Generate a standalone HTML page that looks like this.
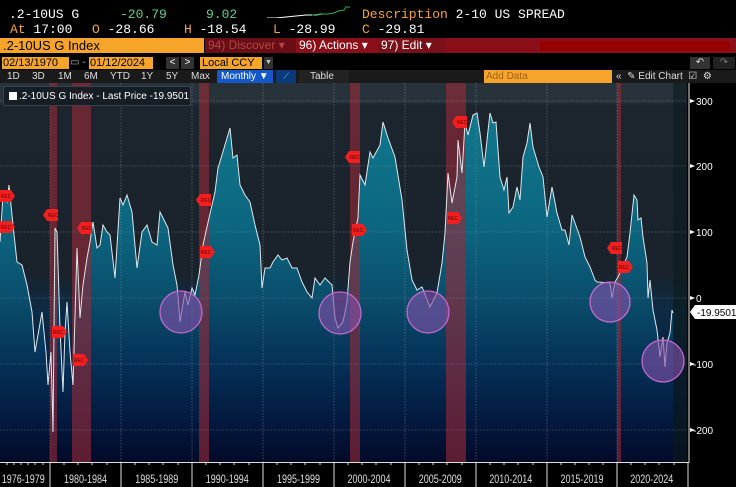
<!DOCTYPE html>
<html><head><meta charset="utf-8"><style>
body{margin:0;width:736px;height:487px;background:#000;overflow:hidden;font-family:"Liberation Sans",sans-serif;position:relative}
.m{font-family:"Liberation Mono",monospace;font-size:13px;position:absolute;white-space:nowrap}
.a{position:absolute;white-space:nowrap}
</style></head><body>
<div class="m" style="left:9px;top:7px;color:#fff">.2-10US G</div>
<div class="m" style="left:120px;top:7px;color:#5fd38a">-20.79</div>
<div class="m" style="left:206px;top:7px;color:#5fd38a">9.02</div>
<div class="m" style="left:362px;top:7px;color:#f7a535">Description <span style="color:#fff">2-10 US SPREAD</span></div>
<div class="m" style="left:10px;top:22px;color:#f7a535">At <span style="color:#fff">17:00</span></div>
<div class="m" style="left:92px;top:22px;color:#f7a535">O <span style="color:#fff">-28.66</span></div>
<div class="m" style="left:184px;top:22px;color:#f7a535">H <span style="color:#fff">-18.54</span></div>
<div class="m" style="left:273px;top:22px;color:#f7a535">L <span style="color:#fff">-28.99</span></div>
<div class="m" style="left:362px;top:22px;color:#f7a535">C <span style="color:#fff">-29.81</span></div>
<svg class="a" style="left:266px;top:2px" width="86" height="16"><polyline points="1,16 10,16 20,15 30,14 40,13 50,13 56,12" stroke="#fff" fill="none" stroke-width="1"/><polyline points="46,13 56,12 62,12 68,11 72,9 78,8 80,5 84,5" stroke="#2db34a" fill="none" stroke-width="1"/></svg>
<div class="a" style="left:0;top:38px;width:204px;height:15px;background:#f7a52a;color:#000;font-size:13px;line-height:15px;padding-left:3px;box-sizing:border-box">.2-10US G Index</div>
<div class="a" style="left:205px;top:38px;width:531px;height:15px;background:#8a0f18"></div>
<div class="a" style="left:205px;top:38px;width:88px;height:15px;background:#6a0d14;color:#b04a4a;font-size:12px;line-height:15px;padding-left:3px">94) Discover ▾</div>
<div class="a" style="left:296px;top:38px;width:80px;height:15px;color:#fff;font-size:12px;line-height:15px;padding-left:3px">96) Actions ▾</div>
<div class="a" style="left:378px;top:38px;width:64px;height:15px;background:#7a1018;color:#fff;font-size:12px;line-height:15px;padding-left:3px">97) Edit ▾</div>
<div class="a" style="left:540px;top:41px;width:190px;height:10px;background:#960000"></div>
<div class="a" style="left:2px;top:57px;width:66px;height:12px;background:#f7a52a;color:#000;font-size:11px;line-height:12px;padding-left:1px">02/13/1970</div>
<div class="a" style="left:70px;top:57px;font-size:10px;color:#bbb;line-height:12px">▭ -</div>
<div class="a" style="left:89px;top:57px;width:63px;height:12px;background:#f7a52a;color:#000;font-size:11px;line-height:12px;padding-left:1px">01/12/2024</div>
<div class="a" style="left:166px;top:57px;width:13px;height:12px;background:#333;color:#fff;font-size:10px;line-height:12px;text-align:center">&lt;</div>
<div class="a" style="left:181px;top:57px;width:13px;height:12px;background:#333;color:#fff;font-size:10px;line-height:12px;text-align:center">&gt;</div>
<div class="a" style="left:200px;top:57px;width:60px;height:12px;background:#f7a52a;color:#000;font-size:11px;line-height:12px;padding-left:2px">Local CCY</div>
<div class="a" style="left:264px;top:57px;width:9px;height:12px;background:#333;color:#ccc;font-size:7px;line-height:12px;text-align:center">▼</div>
<div class="a" style="left:690px;top:57px;width:20px;height:12px;background:#333;color:#ddd;font-size:10px;line-height:12px;text-align:center">↶</div>
<div class="a" style="left:713px;top:57px;width:22px;height:12px;background:#222;color:#777;font-size:10px;line-height:12px;text-align:center">↷</div>
<div class="a" style="left:0;top:70px;width:736px;height:13px;background:#1a1a1a"></div>
<div class="a" style="left:0;top:70px;height:13px;font-size:10px;line-height:13px;color:#ddd;word-spacing:0">
<span style="position:absolute;left:7px">1D</span><span style="position:absolute;left:32px">3D</span><span style="position:absolute;left:58px">1M</span><span style="position:absolute;left:84px">6M</span><span style="position:absolute;left:110px">YTD</span><span style="position:absolute;left:141px">1Y</span><span style="position:absolute;left:166px">5Y</span><span style="position:absolute;left:191px">Max</span></div>
<div class="a" style="left:217px;top:70px;width:56px;height:13px;background:#1258c8;color:#fff;font-size:10px;line-height:13px;padding-left:4px;box-sizing:border-box">Monthly ▼</div>
<div class="a" style="left:276px;top:70px;width:20px;height:13px;background:#0a3a7a;color:#6af;font-size:9px;line-height:13px;text-align:center">⟋</div>
<div class="a" style="left:299px;top:70px;width:50px;height:13px;background:#222;color:#ddd;font-size:10px;line-height:13px;padding-left:11px;box-sizing:border-box">Table</div>
<div class="a" style="left:484px;top:70px;width:128px;height:13px;background:#f7a52a;color:#a0601a;font-size:10px;line-height:13px;padding-left:2px;box-sizing:border-box">Add Data</div>
<div class="a" style="left:616px;top:70px;color:#ddd;font-size:10px;line-height:13px">«&nbsp;&nbsp;✎ Edit Chart&nbsp;&nbsp;☑&nbsp;&nbsp;⚙</div>
<svg class="a" style="left:0;top:83px" width="736" height="404" viewBox="0 83 736 404">
<defs>
<linearGradient id="bg" x1="0" y1="83" x2="0" y2="462" gradientUnits="userSpaceOnUse">
<stop offset="0" stop-color="#28323b"/><stop offset="0.05" stop-color="#28323b"/><stop offset="0.06" stop-color="#1c242d"/><stop offset="0.5" stop-color="#1a232c"/><stop offset="0.6" stop-color="#0d2b45"/><stop offset="0.8" stop-color="#051c40"/><stop offset="1" stop-color="#020926"/></linearGradient>
<linearGradient id="fl" x1="0" y1="100" x2="0" y2="462" gradientUnits="userSpaceOnUse">
<stop offset="0" stop-color="#117a8e"/><stop offset="0.35" stop-color="#0c6680"/><stop offset="0.55" stop-color="#0a4e6c"/><stop offset="0.72" stop-color="#053258"/><stop offset="0.88" stop-color="#041a40"/><stop offset="1" stop-color="#020a28"/></linearGradient>
</defs>
<rect x="0" y="83" width="688" height="379" fill="url(#bg)"/>
<rect x="673" y="83" width="15" height="379" fill="#0c1a1a" opacity=".6"/>
<polygon fill="url(#fl)" points="0,462 0,242 3,195 7,202 9,185 13,225 17,262 22,265 27,285 32,312 35,352 42,312 46,352 48,385 51,352 53,432 55,228 57,232 60,328 63,392 65,332 67,302 70,352 73,385 77,248 80,318 83,285 87,258 90,242 93,222 97,248 100,245 103,225 107,232 110,235 115,278 120,198 123,205 127,195 132,212 137,268 142,232 147,225 152,242 157,245 160,212 165,222 168,228 173,265 177,285 180,322 185,292 188,305 192,288 195,295 199,275 203,245 209,218 215,192 218,168 222,155 227,138 230,128 233,158 237,155 240,185 245,195 250,202 255,225 260,245 262,288 265,268 270,268 273,262 278,255 282,260 287,258 292,268 297,268 302,282 307,292 312,298 315,278 320,285 325,278 332,285 335,318 338,328 343,322 347,302 350,262 353,242 358,218 360,175 365,185 370,152 373,158 380,145 383,122 388,138 395,157 402,200 407,250 412,280 417,290 422,287 430,307 437,293 442,263 445,233 448,173 452,203 457,177 458,140 462,173 465,123 468,135 473,115 477,113 480,133 484,167 487,140 490,113 493,123 496,122 498,150 500,177 504,190 507,177 509,213 513,207 517,187 520,200 523,157 527,143 530,123 533,147 539,167 543,177 547,217 552,187 557,213 562,230 565,230 569,245 572,215 575,223 580,237 585,257 590,267 595,280 597,282 610,283 612,298 615,282 618,277 627,257 630,233 634,195 637,200 638,220 641,218 643,237 647,263 648,298 650,280 653,310 657,330 660,357 663,337 665,367 667,343 670,333 672,310 673,313 673,462"/>
<g fill="#9a2a38" opacity=".6">
<rect x="50" y="83" width="7" height="379"/><rect x="72" y="83" width="19" height="379"/><rect x="199" y="83" width="10" height="379"/><rect x="350" y="83" width="10" height="379"/><rect x="446" y="83" width="20" height="379"/><rect x="617" y="83" width="4" height="379"/></g>
<g stroke="#7d8a96" stroke-width=".6" stroke-dasharray="1.5,1.5" opacity=".8">
<line x1="0" y1="101" x2="688" y2="101"/><line x1="0" y1="166" x2="688" y2="166"/><line x1="0" y1="232" x2="688" y2="232"/><line x1="0" y1="298" x2="688" y2="298"/><line x1="0" y1="364" x2="688" y2="364"/><line x1="0" y1="430" x2="688" y2="430"/>
<line x1="50" y1="83" x2="50" y2="462"/><line x1="121" y1="83" x2="121" y2="462"/><line x1="192" y1="83" x2="192" y2="462"/><line x1="263" y1="83" x2="263" y2="462"/><line x1="334" y1="83" x2="334" y2="462"/><line x1="405" y1="83" x2="405" y2="462"/><line x1="476" y1="83" x2="476" y2="462"/><line x1="547" y1="83" x2="547" y2="462"/><line x1="617" y1="83" x2="617" y2="462"/></g>
<polyline fill="none" stroke="#dfe6ea" stroke-width="1" points="0,242 3,195 7,202 9,185 13,225 17,262 22,265 27,285 32,312 35,352 42,312 46,352 48,385 51,352 53,432 55,228 57,232 60,328 63,392 65,332 67,302 70,352 73,385 77,248 80,318 83,285 87,258 90,242 93,222 97,248 100,245 103,225 107,232 110,235 115,278 120,198 123,205 127,195 132,212 137,268 142,232 147,225 152,242 157,245 160,212 165,222 168,228 173,265 177,285 180,322 185,292 188,305 192,288 195,295 199,275 203,245 209,218 215,192 218,168 222,155 227,138 230,128 233,158 237,155 240,185 245,195 250,202 255,225 260,245 262,288 265,268 270,268 273,262 278,255 282,260 287,258 292,268 297,268 302,282 307,292 312,298 315,278 320,285 325,278 332,285 335,318 338,328 343,322 347,302 350,262 353,242 358,218 360,175 365,185 370,152 373,158 380,145 383,122 388,138 395,157 402,200 407,250 412,280 417,290 422,287 430,307 437,293 442,263 445,233 448,173 452,203 457,177 458,140 462,173 465,123 468,135 473,115 477,113 480,133 484,167 487,140 490,113 493,123 496,122 498,150 500,177 504,190 507,177 509,213 513,207 517,187 520,200 523,157 527,143 530,123 533,147 539,167 543,177 547,217 552,187 557,213 562,230 565,230 569,245 572,215 575,223 580,237 585,257 590,267 595,280 597,282 610,283 612,298 615,282 618,277 627,257 630,233 634,195 637,200 638,220 641,218 643,237 647,263 648,298 650,280 653,310 657,330 660,357 663,337 665,367 667,343 670,333 672,310 673,313"/>
<g fill="rgba(130,80,170,0.62)" stroke="#c468cc" stroke-width="1.3">
<circle cx="181" cy="312" r="21"/><circle cx="340" cy="313" r="21"/><circle cx="428" cy="312" r="21"/><circle cx="610" cy="302" r="20"/><circle cx="663" cy="361" r="21"/></g>
<g font-size="5" font-family="Liberation Sans" text-anchor="middle" fill="#600">
<g fill="#f02020"><polygon points="0,190 11,190 15,196 11,202 0,202"/><polygon points="0,221 11,221 15,227 11,233 0,233"/><polygon points="47,209 58,209 58,221 47,221 43,215"/><polygon points="81,222 92,222 92,234 81,234 77,228"/><polygon points="52,326 63,326 67,332 63,338 52,338"/><polygon points="73,354 84,354 88,360 84,366 73,366"/><polygon points="200,194 211,194 211,206 200,206 196,200"/><polygon points="200,246 211,246 215,252 211,258 200,258"/><polygon points="349,151 360,151 360,163 349,163 345,157"/><polygon points="352,224 363,224 367,230 363,236 352,236"/><polygon points="456,116 467,116 467,128 456,128 452,122"/><polygon points="447,212 458,212 462,218 458,224 447,224"/><polygon points="611,242 622,242 622,254 611,254 607,248"/><polygon points="618,261 629,261 633,267 629,273 618,273"/></g>
<text x="6" y="198">REC</text><text x="6" y="229">REC</text><text x="53" y="217">REC</text><text x="87" y="230">REC</text><text x="58" y="334">REC</text><text x="79" y="362">REC</text><text x="206" y="202">REC</text><text x="206" y="254">REC</text><text x="355" y="159">REC</text><text x="358" y="232">REC</text><text x="462" y="124">REC</text><text x="453" y="220">REC</text><text x="617" y="250">REC</text><text x="624" y="269">REC</text></g>
<rect x="687" y="83" width="49" height="404" fill="#000"/>
<rect x="0" y="462" width="688" height="25" fill="#000"/>
<line x1="689" y1="83" x2="689" y2="463" stroke="#ddd" stroke-width="1"/>
<line x1="0" y1="462.5" x2="689" y2="462.5" stroke="#ddd" stroke-width="1"/>
<g fill="#fff"><polygon points="690,99 695,101 690,103"/><polygon points="690,164 695,166 690,168"/><polygon points="690,230 695,232 690,234"/><polygon points="690,296 695,298 690,300"/><polygon points="690,362 695,364 690,366"/><polygon points="690,428 695,430 690,432"/></g>
<g fill="#fff" font-size="10" font-family="Liberation Sans"><text x="696" y="105">300</text><text x="696" y="170">200</text><text x="696" y="236">100</text><text x="696" y="302">0</text><text x="693" y="368">-100</text><text x="693" y="434">-200</text></g>
<polygon points="690,312 695,305 736,305 736,319 695,319" fill="#fff"/>
<text x="697" y="316" font-size="10" font-family="Liberation Sans" fill="#000">-19.9501</text>
<g stroke="#ddd" stroke-width="1"><line x1="50" y1="462" x2="50" y2="487"/><line x1="121" y1="462" x2="121" y2="487"/><line x1="192" y1="462" x2="192" y2="487"/><line x1="263" y1="462" x2="263" y2="487"/><line x1="334" y1="462" x2="334" y2="487"/><line x1="405" y1="462" x2="405" y2="487"/><line x1="476" y1="462" x2="476" y2="487"/><line x1="547" y1="462" x2="547" y2="487"/><line x1="617" y1="462" x2="617" y2="487"/><line x1="688" y1="462" x2="688" y2="487"/></g>
<g stroke="#ddd" stroke-width="1"><path d="M7 462v3M14 462v3M21 462v3M28 462v3M35 462v3M43 462v3M64 462v3M78 462v3M92 462v3M107 462v3M135 462v3M149 462v3M163 462v3M178 462v3M206 462v3M220 462v3M234 462v3M249 462v3M277 462v3M291 462v3M305 462v3M320 462v3M348 462v3M362 462v3M376 462v3M391 462v3M419 462v3M433 462v3M447 462v3M462 462v3M490 462v3M504 462v3M518 462v3M533 462v3M561 462v3M575 462v3M589 462v3M603 462v3M631 462v3M645 462v3M659 462v3M674 462v3"/></g>
<g fill="#ddd" font-size="12" font-family="Liberation Sans" text-anchor="middle" transform="scale(0.75,1)"><text x="31" y="483">1976-1979</text><text x="114" y="483">1980-1984</text><text x="209" y="483">1985-1989</text><text x="303" y="483">1990-1994</text><text x="398" y="483">1995-1999</text><text x="492" y="483">2000-2004</text><text x="587" y="483">2005-2009</text><text x="681" y="483">2010-2014</text><text x="776" y="483">2015-2019</text><text x="869" y="483">2020-2024</text></g>
</svg>
<div class="a" style="left:3px;top:86px;width:188px;height:20px;background:rgba(20,28,36,.9);border:1px solid #3a434c;border-radius:2px;color:#fff;font-size:10px;line-height:20px;padding-left:5px;box-sizing:border-box"><span style="display:inline-block;width:8px;height:8px;background:#fff;vertical-align:-1px;margin-right:2px"></span>.2-10US G Index - Last Price -19.9501</div>
</body></html>
